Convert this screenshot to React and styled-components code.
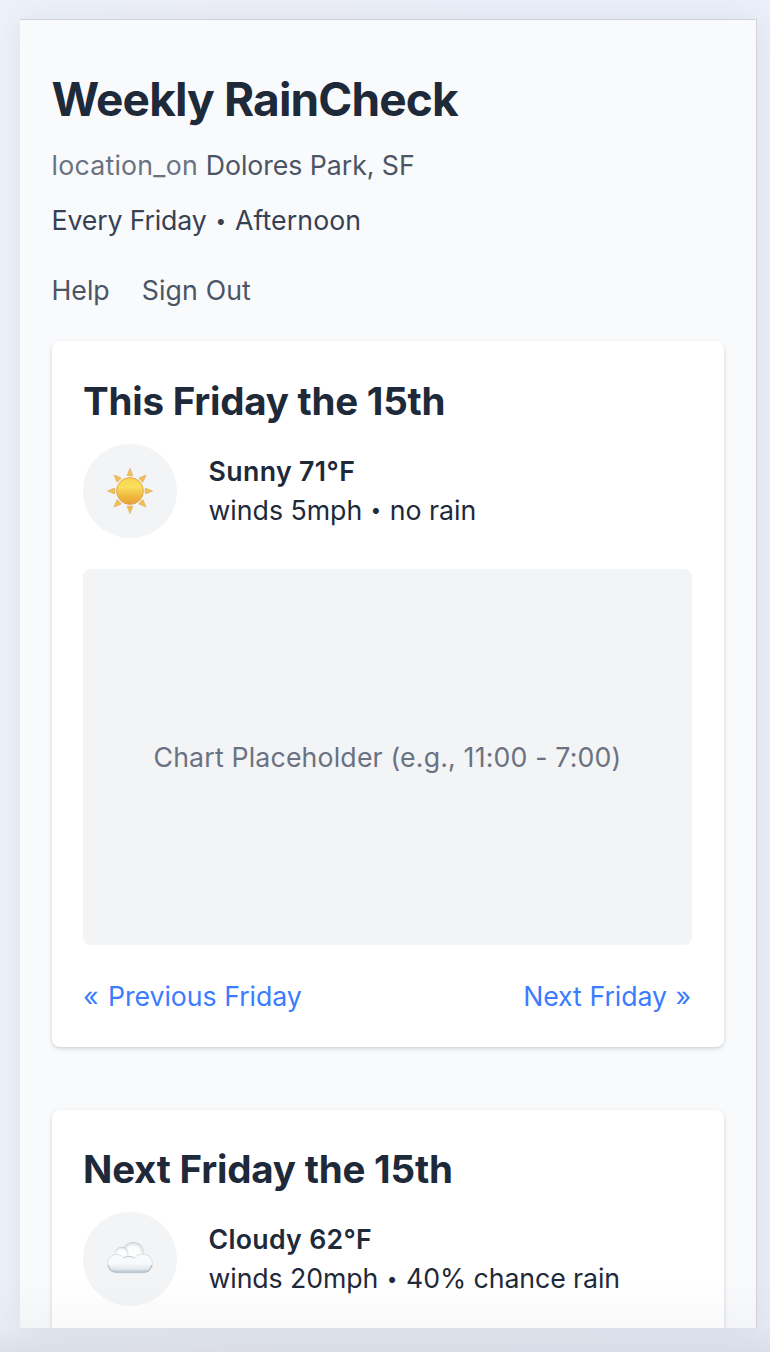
import React from "react";
import styled, { createGlobalStyle } from "styled-components";

const GlobalStyle = createGlobalStyle`
  *, *::before, *::after { box-sizing: border-box; }
  body {
    margin: 0;
    background: #ebeef8;
    font-family: Inter, "Liberation Sans", sans-serif;
    font-size: 26.7px;
    line-height: 39px;
    color: #1e2939;
    -webkit-font-smoothing: antialiased;
  }
`;

const Desktop = styled.div`
  position: relative;
  height: 1352px;
  padding: 19px 13px 24px 20px;
  overflow: hidden;
  background: linear-gradient(90deg, #edf1fa 0, #eceff8 30%, #ebeffa 100%);
`;

const Screen = styled.main`
  height: 1309px;
  box-shadow: 0 2px 28px rgba(70, 70, 75, 0.09);
`;

const Viewport = styled.div`
  height: 100%;
  overflow: hidden;
  padding: 50px 32px 0 31.5px;
  background: #f9fafc;
  border-top: 1px solid #d1d1d8;
  border-right: 1px solid #d1d1d8;
`;

const BottomShade = styled.div`
  position: absolute;
  inset: auto 0 0 0;
  height: 72px;
  pointer-events: none;
  background: linear-gradient(rgba(90, 98, 105, 0), rgba(90, 98, 105, 0.035) 66%, rgba(90, 98, 100, 0.12));
`;

const Text = styled.span`
  white-space: pre;
  letter-spacing: ${(p) => p.$track || 0}px;
`;

const Bullet = styled.span`
  display: inline-block;
  width: ${(p) => p.$width || 12.4}px;
  font-size: 19px;
  line-height: 20px;
  text-align: center;
  vertical-align: 2.2px;
  letter-spacing: 0;
`;

const Title = styled.h1`
  margin: 0;
  font-size: 46px;
  line-height: 58px;
  font-weight: 700;
  letter-spacing: -0.86px;
  white-space: nowrap;
`;

const Location = styled.p`
  margin: 18px 0 0;
  color: #4a5565;
`;

const LocationIcon = styled(Text)`
  color: #6a7282;
`;

const Schedule = styled.p`
  margin: 16px 0 0;
  color: #364153;
`;

const Nav = styled.nav`
  display: flex;
  gap: 32px;
  margin-top: 31px;
  color: #4a5565;
`;

const Card = styled.section`
  margin-top: ${(p) => p.$gap}px;
  height: 705.5px;
  padding: 30.5px 32px 31px 31.5px;
  background: #fff;
  border-radius: 8px;
  box-shadow: 0 2px 5px rgba(0, 0, 0, 0.12), 0 1px 3px rgba(0, 0, 0, 0.06);
`;

const CardTitle = styled.h2`
  margin: 0;
  font-size: 38.5px;
  line-height: 58px;
  font-weight: 700;
  white-space: nowrap;
  letter-spacing: ${(p) => p.$track}px;
`;

const Weather = styled.div`
  display: flex;
  align-items: center;
  gap: 31.5px;
  margin-top: 14px;
`;

const Badge = styled.div`
  display: grid;
  place-items: center;
  width: 94px;
  height: 94px;
  border-radius: 50%;
  background: #f3f4f6;

  svg { display: block; }
`;

const Details = styled.div`
  display: flex;
  flex-direction: column;
`;

const Condition = styled(Text)`
  font-weight: 600;
`;

const Chart = styled.div`
  display: grid;
  place-items: center;
  height: 376px;
  margin-top: 31px;
  padding-top: 1px;
  border-radius: 8px;
  background: #f3f4f6;
  color: #6a7282;
`;

const Pager = styled.div`
  display: flex;
  justify-content: space-between;
  margin-top: 32px;
  padding-right: 1px;
  color: #3b7cff;
`;

const PageLink = styled(Text)`
  word-spacing: 0.4px;
  letter-spacing: -0.08px;
`;

const Arrow = styled.span`
  margin: ${(p) => (p.$end ? "0 0 0 0.8px" : "0 1.8px 0 0")};
`;

const SunIcon = () => (
  <svg width="46" height="46" viewBox="0 0 46 46">
    <defs>
      <linearGradient id="sun" x1="0" y1="0" x2="0" y2="1">
        <stop offset="0" stopColor="#f7d548" />
        <stop offset="0.35" stopColor="#fae05d" />
        <stop offset="0.7" stopColor="#efb83d" />
        <stop offset="1" stopColor="#e6a139" />
      </linearGradient>
    </defs>
    {[0, 45, 90, 135, 180, 225, 270, 315].map((a) => (
      <path
        key={a}
        d="M23 0.5 L25.9 7.6 Q23 8.2 20.1 7.6 Z"
        transform={`rotate(${a} 23 23)`}
        fill="#f3c04a"
        stroke="#dcae6c"
        strokeWidth="0.7"
        strokeLinejoin="round"
      />
    ))}
    <circle cx="23" cy="23" r="13.4" fill="url(#sun)" stroke="#dfa451" strokeWidth="0.9" />
  </svg>
);

const CloudIcon = () => (
  <svg width="46" height="46" viewBox="0 0 46 46">
    <defs>
      <radialGradient id="puff" cx="0.5" cy="0.56" r="0.54">
        <stop offset="0" stopColor="#ffffff" />
        <stop offset="0.6" stopColor="#fbfcfc" />
        <stop offset="0.85" stopColor="#e6ebee" />
        <stop offset="1" stopColor="#c3cdd7" />
      </radialGradient>
      <linearGradient id="base" x1="0" y1="0" x2="0" y2="1">
        <stop offset="0" stopColor="#fafbfc" />
        <stop offset="0.5" stopColor="#f8f9fa" />
        <stop offset="0.78" stopColor="#e5eaee" />
        <stop offset="1" stopColor="#b5c1cc" />
      </linearGradient>
      <filter id="soft" x="-20%" y="-50%" width="140%" height="200%">
        <feGaussianBlur stdDeviation="0.5" />
      </filter>
    </defs>
    <circle cx="26.2" cy="16.6" r="10.7" fill="url(#puff)" />
    <circle cx="14.6" cy="17.6" r="6.8" fill="url(#puff)" />
    <path
      d="M10 36.8 C4.5 36.8 0.6 32.6 0.6 27.4 C0.6 22.3 4.6 18.4 9.7 18.4 C12.8 18.4 15.6 19.7 17 22 C19.5 19.8 24.5 19.8 27.2 22.2 C29.2 19.6 32.4 18.2 35.8 18.2 C41.2 18.2 45.4 22.3 45.4 27.5 C45.4 32.7 41.5 36.8 36 36.8 Z"
      fill="url(#base)"
      stroke="#ccd5dc"
      strokeWidth="0.7"
    />
    <path
      d="M17 22 C19.5 19.8 24.5 19.8 27.2 22.2"
      fill="none"
      stroke="#bdc8d1"
      strokeWidth="1"
      filter="url(#soft)"
    />
    <path
      d="M1.3 29 C2.2 33.8 5.8 36.2 10 36.2 L36 36.2 C40.2 36.2 43.8 33.8 44.7 29"
      fill="none"
      stroke="#b7c3ce"
      strokeWidth="1.3"
      filter="url(#soft)"
    />
  </svg>
);

export default function App() {
  return (
    <>
      <GlobalStyle />
      <Desktop>
        <Screen>
          <Viewport>
            <Title>Weekly RainCheck</Title>
            <Location>
              <LocationIcon $track={0.24}>location_on </LocationIcon>
              <Text $track={-0.05}>Dolores Park, SF</Text>
            </Location>
            <Schedule>
              <Text $track={-0.15}>Every Friday <Bullet $width={13.6}>•</Bullet> </Text>
              <Text $track={0.1}>Afternoon</Text>
            </Schedule>
            <Nav>
              <Text>Help</Text>
              <Text $track={0.14}>Sign Out</Text>
            </Nav>
            <Card $gap={31}>
              <CardTitle $track={-0.23}>This Friday the 15th</CardTitle>
              <Weather>
                <Badge><SunIcon /></Badge>
                <Details>
                  <Condition $track={0.38}>Sunny 71°F</Condition>
                  <Text>winds 5mph <Bullet>•</Bullet> no rain</Text>
                </Details>
              </Weather>
              <Chart>
                <Text $track={0.17}>Chart Placeholder (e.g., 11:00 - 7:00)</Text>
              </Chart>
              <Pager>
                <PageLink><Arrow>«</Arrow> Previous Friday</PageLink>
                <PageLink>Next Friday <Arrow $end>»</Arrow></PageLink>
              </Pager>
            </Card>
            <Card $gap={63}>
              <CardTitle $track={-0.2}>Next Friday the 15th</CardTitle>
              <Weather>
                <Badge><CloudIcon /></Badge>
                <Details>
                  <Condition $track={0.3}>Cloudy 62°F</Condition>
                  <Text $track={-0.08}>winds 20mph <Bullet $width={13}>•</Bullet> 40% chance rain</Text>
                </Details>
              </Weather>
            </Card>
          </Viewport>
        </Screen>
        <BottomShade />
      </Desktop>
    </>
  );
}
